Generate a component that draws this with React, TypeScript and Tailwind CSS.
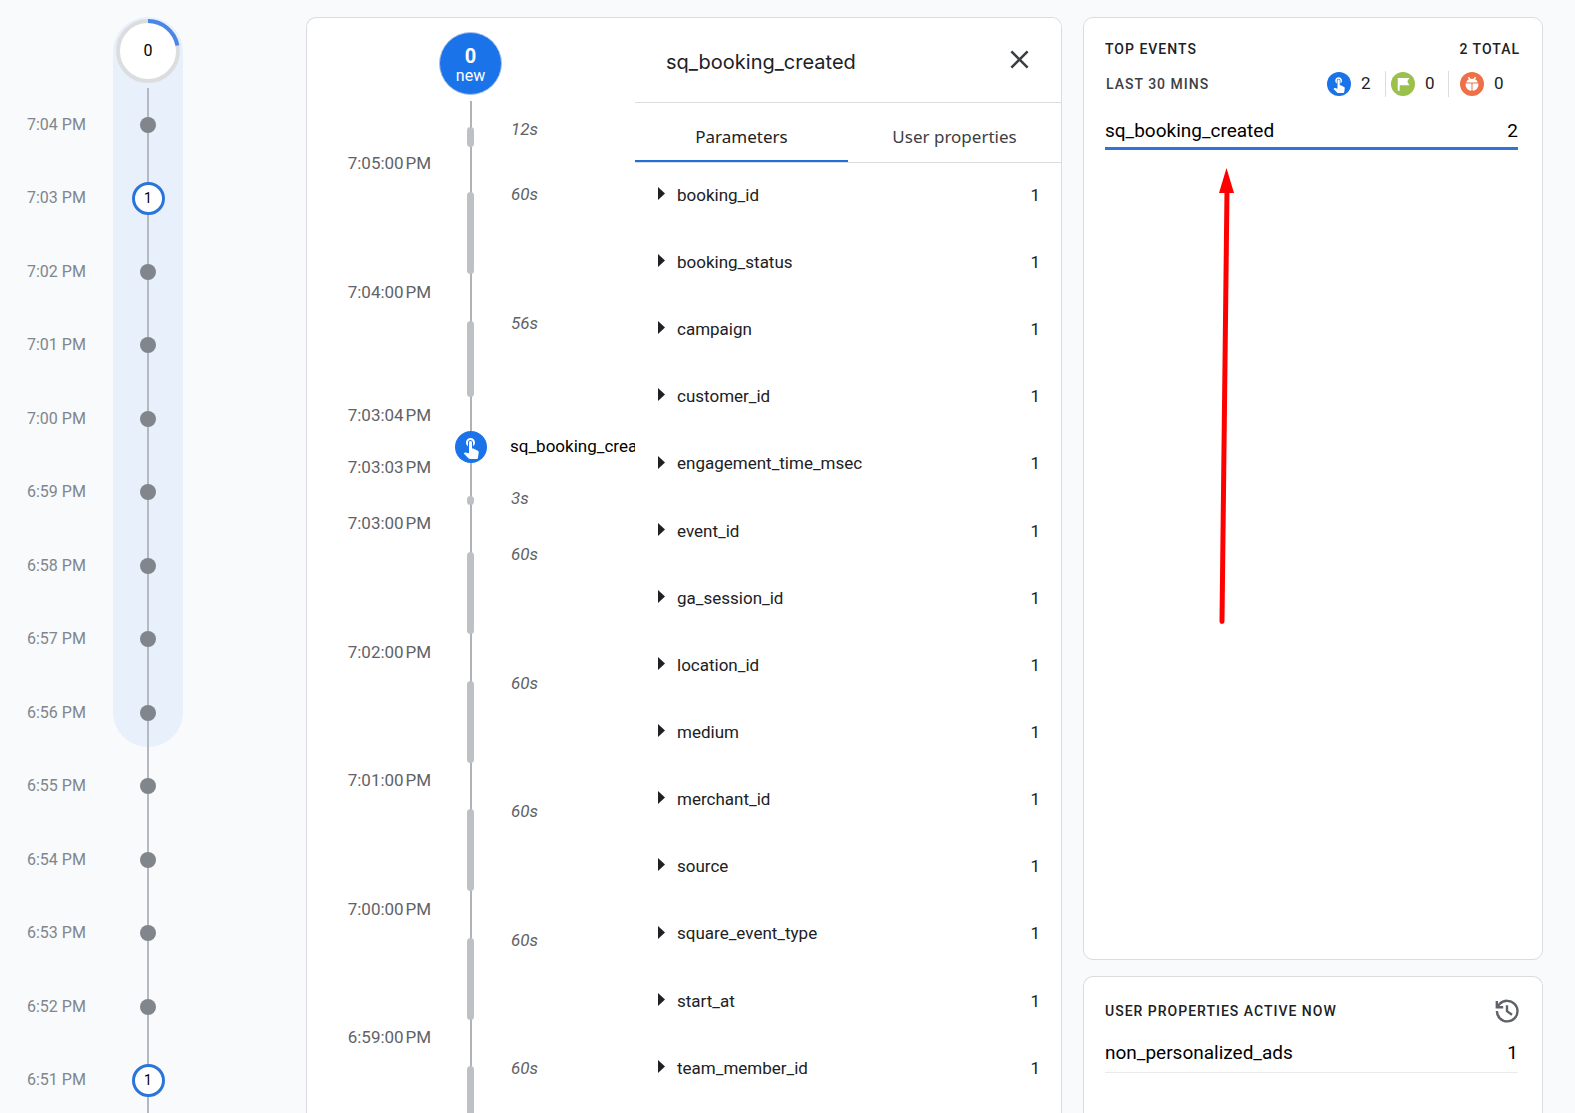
import React from "react";
import { MdTouchApp, MdClose } from "react-icons/md";

const minutes: { time: string; count?: number }[] = [
  { time: "7:04 PM" },
  { time: "7:03 PM", count: 1 },
  { time: "7:02 PM" },
  { time: "7:01 PM" },
  { time: "7:00 PM" },
  { time: "6:59 PM" },
  { time: "6:58 PM" },
  { time: "6:57 PM" },
  { time: "6:56 PM" },
  { time: "6:55 PM" },
  { time: "6:54 PM" },
  { time: "6:53 PM" },
  { time: "6:52 PM" },
  { time: "6:51 PM", count: 1 },
];

const parameters = [
  "booking_id",
  "booking_status",
  "campaign",
  "customer_id",
  "engagement_time_msec",
  "event_id",
  "ga_session_id",
  "location_id",
  "medium",
  "merchant_id",
  "source",
  "square_event_type",
  "start_at",
  "team_member_id",
];

function MinuteTimeline() {
  return (
    <aside className="relative h-full">
      <div className="absolute top-0 left-[113px] h-[730px] w-[70px] rounded-full bg-[#e8f0fb]" />
      <div className="relative flex h-full flex-col">
        <div className="ml-[113px] flex h-[71px] w-[70px] shrink-0 justify-center pt-0.5">
          <div className="relative flex size-16 items-center justify-center">
            <svg className="absolute inset-0 size-16" viewBox="0 0 64 64" aria-hidden="true">
              <circle cx="32" cy="32" r="30" fill="#fff" stroke="#dcdddf" strokeWidth="4" />
              <path d="M32 2a30 30 0 0 1 29.4 24.5" fill="none" stroke="#4a86e8" strokeWidth="4" />
            </svg>
            <span className="relative text-base text-black">0</span>
          </div>
        </div>
        <div className="relative grid h-[1029px] shrink-0 auto-rows-fr">
          <div className="absolute top-0 bottom-0 left-[147px] w-0.5 bg-[#b4b9bf]" />
          {minutes.map((m) => (
            <div key={m.time} className="relative flex items-center">
              <span className="w-[113px] pl-[27px] text-base text-[#80868b]">{m.time}</span>
              <span className="flex w-[70px] justify-center">
                {m.count ? (
                  <button className="flex size-[33px] items-center justify-center rounded-full border-3 border-[#2a75d9] bg-white text-sm text-black">
                    {m.count}
                  </button>
                ) : (
                  <span className="size-4 rounded-full bg-[#80868b]" />
                )}
              </span>
            </div>
          ))}
        </div>
      </div>
    </aside>
  );
}

function Gap({ time, label, bar }: { time?: string; label: string; bar: string }) {
  return (
    <div className="flex flex-col">
      {time && <TimeMark time={time} />}
      <div className="flex">
        <span className="w-[160px] shrink-0" />
        <span className="flex w-[7px] shrink-0 justify-center pt-[19px] pb-2">
          <span className={"w-[7px] rounded-full bg-[#bdc1c6] " + bar} />
        </span>
        <span className="pt-[11px] pl-[37px] text-[17px] leading-5 text-[#5f6368] italic">{label}</span>
      </div>
    </div>
  );
}

function TimeMark({ time }: { time: string }) {
  return (
    <span className="block h-5 w-[124px] text-right text-[17px] leading-5 whitespace-nowrap text-[#5f6368]">
      {time}&#8202;PM
    </span>
  );
}

function SecondsStream() {
  return (
    <section className="relative w-[328px] shrink-0 overflow-hidden">
      <div className="absolute top-[83px] bottom-0 left-[163px] w-0.5 bg-[#b0b3b6]" />
      <div className="relative">
        <div className="flex h-[90px] pt-[14px] pl-[132px]">
          <div className="flex size-[63px] flex-col items-center justify-center rounded-full border border-[#a9c4ec] bg-[#1a73e8] pt-1 text-white">
            <span className="text-xl leading-5 font-bold">0</span>
            <span className="text-base leading-5">new</span>
          </div>
        </div>
        <Gap label="12s" bar="h-5" />
        <div className="-mt-0.5">
          <Gap time="7:05:00" label="60s" bar="h-[82px]" />
        </div>
        <Gap time="7:04:00" label="56s" bar="h-[76px]" />
        <TimeMark time="7:03:04" />
        <div className="mt-1.5 -mb-1.5 flex h-8 items-center pl-[148px]">
          <span className="flex size-8 shrink-0 items-center justify-center rounded-full bg-[#1a73e8] text-white">
            <MdTouchApp className="size-6" />
          </span>
          <button className="ml-[23px] pb-0.5 text-[17px] leading-5 whitespace-nowrap text-black">
            sq_booking_created
          </button>
        </div>
        <Gap time="7:03:03" label="3s" bar="h-[9px]" />
        <div className="grid h-[643px] auto-rows-fr">
          <Gap time="7:03:00" label="60s" bar="h-[82px]" />
          <Gap time="7:02:00" label="60s" bar="h-[82px]" />
          <Gap time="7:01:00" label="60s" bar="h-[82px]" />
          <Gap time="7:00:00" label="60s" bar="h-[82px]" />
          <Gap time="6:59:00" label="60s" bar="h-[82px]" />
        </div>
      </div>
    </section>
  );
}

function EventDetail() {
  return (
    <section className="flex min-w-0 flex-1 flex-col overflow-hidden bg-white">
      <header className="flex h-[85px] shrink-0 items-center justify-between border-b border-[#dadce0] pr-[26px] pl-[31px]">
        <h2 className="pt-1 font-['Inter'] text-xl text-[#202124]">sq_booking_created</h2>
        <button aria-label="Close" className="pb-0.5 text-[#3c4043]">
          <MdClose className="size-[31px]" />
        </button>
      </header>
      <div role="tablist" className="flex h-[60px] shrink-0 border-b border-[#dadce0] font-['Noto_Sans'] text-[17px]">
        <button role="tab" aria-selected="true" className="flex-1 border-b-2 border-[#1f6fd8] pt-2.5 text-[#202124]">
          Parameters
        </button>
        <button role="tab" aria-selected="false" className="flex-1 pt-2 text-[#3c4043]">
          User properties
        </button>
      </div>
      <div className="grid h-[940px] shrink-0 auto-rows-fr">
        {parameters.map((p) => (
          <button key={p} className="flex items-center pr-[21px] pb-0.5 pl-[23px] text-left text-[17px] text-[#202124]">
            <svg className="mb-1 h-[13px] w-[7px]" viewBox="0 0 7 13" aria-hidden="true">
              <path d="M0 0l7 6.5L0 13z" fill="#202124" />
            </svg>
            <span className="ml-3 flex-1">{p}</span>
            <span>1</span>
          </button>
        ))}
      </div>
    </section>
  );
}

function FlagIcon() {
  return (
    <svg className="size-[18px]" viewBox="0 0 24 24" aria-hidden="true">
      <path d="M5 4h15.500l-2.800 4.800 2.800 4.800H7.600V21H5z" fill="currentColor" />
    </svg>
  );
}

function BugIcon() {
  return (
    <svg className="size-6" viewBox="0 0 24 24" aria-hidden="true">
      <path d="M6.300 10.600a5.800 4.600 0 0 1 11.400 0z" fill="#fff" />
      <path d="M8.400 5.200l1.800 2.600M15.600 5.200l-1.800 2.600" stroke="#fff" strokeWidth="1.500" />
      <path d="M5.600 11.600h5.900v7.200a6.100 6.100 0 0 1-5.900-7.200zM12.500 11.600h5.900a6.100 6.100 0 0 1-5.900 7.200z" fill="#fff" />
    </svg>
  );
}

function HistoryIcon() {
  return (
    <svg className="size-[26px]" viewBox="0 0 24 24" fill="none" stroke="currentColor" strokeWidth="2.200" aria-hidden="true">
      <path d="M2.700 12a9.500 9.500 0 1 0 9.500-9.400A9.800 9.800 0 0 0 5 5.700L3 8" />
      <path d="M2.600 2.800v5.700h5.900" />
      <path d="M12 6.800v5.400l4.600 3.300" />
    </svg>
  );
}

function TopEvents() {
  return (
    <section className="relative flex-1 rounded-[10px] border border-[#dadce0] bg-white pt-[21px] pr-6 pl-[21px]">
      <div className="flex justify-between text-sm leading-5 font-medium tracking-[1px] text-[#202124]">
        <h3>TOP EVENTS</h3>
        <span className="-mr-0.5">2 TOTAL</span>
      </div>
      <div className="mt-3 flex h-[26px] items-center">
        <span className="flex-1 pl-px text-sm font-medium tracking-[1px] text-[#3c4043]">LAST 30 MINS</span>
        <span className="flex items-center text-[17px] text-[#202124]">
          <span className="flex size-6 items-center justify-center rounded-full bg-[#1a73e8] text-white">
            <MdTouchApp className="size-[18px]" />
          </span>
          <span className="ml-2.5 w-3">2</span>
          <span className="mr-[5px] ml-3 h-[26px] w-px bg-[#dadce0]" />
          <span className="flex size-6 items-center justify-center rounded-full bg-[#9bc04b] text-white">
            <FlagIcon />
          </span>
          <span className="ml-2.5 w-3">0</span>
          <span className="mr-[11px] ml-[11px] h-[26px] w-px bg-[#dadce0]" />
          <span className="flex size-6 items-center justify-center rounded-full bg-[#ee7048]">
            <BugIcon />
          </span>
          <span className="mr-3 ml-2.5 w-3">0</span>
        </span>
      </div>
      <button className="mt-5 flex w-full justify-between border-b-[3px] border-[#2f74d6] pb-0.5 text-[19px] leading-7 text-black">
        <span>sq_booking_created</span>
        <span>2</span>
      </button>
      <svg className="absolute top-[150px] left-[135px] h-[460px] w-4" viewBox="0 0 16 460" aria-hidden="true">
        <path d="M8 22L3 453.500" stroke="#fe0000" strokeWidth="5" strokeLinecap="round" />
        <path d="M7.500 0L15 25H0z" fill="#fe0000" />
      </svg>
    </section>
  );
}

function UserProperties() {
  return (
    <section className="h-[137px] shrink-0 rounded-t-[10px] border border-b-0 border-[#dadce0] bg-white pt-[21px] pr-6 pl-[21px]">
      <div className="flex h-[26px] items-center justify-between">
        <h3 className="text-sm font-medium tracking-[1px] text-[#202124]">USER PROPERTIES ACTIVE NOW</h3>
        <button aria-label="History" className="-mr-0.5 text-[#5f6368]">
          <HistoryIcon />
        </button>
      </div>
      <div className="mt-[15px] flex justify-between border-b border-[#e8eaed] pb-[5px] text-[19px] leading-7 text-black">
        <span>non_personalized_ads</span>
        <span>1</span>
      </div>
    </section>
  );
}

export default function App() {
  return (
    <main className="grid h-screen min-h-[700px] grid-cols-[285px_minmax(0,756fr)_minmax(0,460fr)] grid-rows-[minmax(0,1fr)] gap-x-[21px] overflow-hidden bg-[#f8fafc] pt-[17px] pr-8 font-['Roboto',sans-serif]">
      <MinuteTimeline />
      <div className="flex overflow-hidden rounded-t-[10px] border border-b-0 border-[#dadce0] bg-white">
        <SecondsStream />
        <EventDetail />
      </div>
      <div className="flex flex-col gap-4">
        <TopEvents />
        <UserProperties />
      </div>
    </main>
  );
}
